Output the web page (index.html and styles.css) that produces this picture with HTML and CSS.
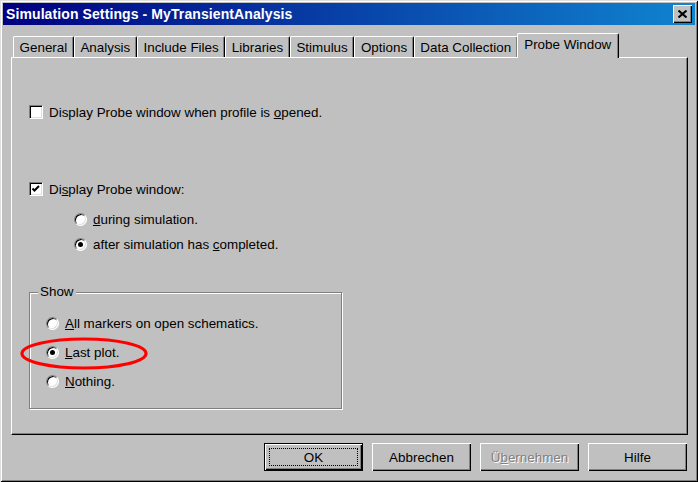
FILE: index.html
```html
<!DOCTYPE html>
<html lang="de">
<head>
  <meta charset="UTF-8" />
  <title>Simulation Settings - MyTransientAnalysis</title>
  <link rel="stylesheet" href="styles.css">
</head>
<body>
  <div class="window">
    <div class="titlebar">
      <span class="title">Simulation Settings - MyTransientAnalysis</span>
      <span class="close">
        <svg width="9" height="8" viewBox="0 0 9 8"><path d="M0.5 0.5 L8.5 7.5 M8.5 0.5 L0.5 7.5" stroke="#000" stroke-width="2" fill="none"/></svg>
      </span>
    </div>

    <div class="tabs">
      <div class="tab">General</div>
      <div class="tab">Analysis</div>
      <div class="tab">Include Files</div>
      <div class="tab">Libraries</div>
      <div class="tab">Stimulus</div>
      <div class="tab">Options</div>
      <div class="tab">Data Collection</div>
      <div class="tab active">Probe Window</div>
    </div>

    <div class="panel">
      <div class="row row-open">
        <span class="checkbox"></span>
        <span class="label">Display Probe window when profile is <u>o</u>pened.</span>
      </div>

      <div class="row row-display">
        <span class="checkbox">
          <svg width="8" height="8" viewBox="0 0 8 8"><path d="M0.5 3.5 L2.5 5.5 L7 1" stroke="#000" stroke-width="2" fill="none"/></svg>
        </span>
        <span class="label">Di<u>s</u>play Probe window:</span>
      </div>

      <div class="row option row-during">
        <span class="radio"></span>
        <span class="label"><u>d</u>uring simulation.</span>
      </div>

      <div class="row option row-after">
        <span class="radio on"></span>
        <span class="label">after simulation has <u>c</u>ompleted.</span>
      </div>

      <div class="group">
        <span class="group-title">Show</span>
        <div class="row group-row first">
          <span class="radio"></span>
          <span class="label"><u>A</u>ll markers on open schematics.</span>
        </div>
        <div class="row group-row">
          <span class="radio on"></span>
          <span class="label"><u>L</u>ast plot.</span>
        </div>
        <div class="row group-row">
          <span class="radio"></span>
          <span class="label"><u>N</u>othing.</span>
        </div>
        <svg class="mark" width="128" height="33" viewBox="0 0 128 33">
          <ellipse cx="64" cy="16.5" rx="62" ry="14.5" stroke="#ff0000" stroke-width="3.2" fill="none"/>
        </svg>
      </div>
    </div>

    <div class="buttons">
      <div class="btn default"><span class="focus">OK</span></div>
      <div class="btn">Abbrechen</div>
      <div class="btn disabled">Ü<u>b</u>ernehmen</div>
      <div class="btn">Hilfe</div>
    </div>
  </div>
</body>
</html>
```

FILE: styles.css
```css
body {
  margin: 0;
  font-family: 'Liberation Sans', Arial, sans-serif;
  font-size: 13.4px;
  color: #000;
  background: #c0c0c0;
}
.window {
  width: 698px;
  height: 482px;
  box-sizing: border-box;
  padding: 3px;
  background: #c0c0c0;
  box-shadow: inset 1px 1px 0 #dfdfdf, inset -1px -1px 0 #000,
              inset 2px 2px 0 #fff, inset -2px -2px 0 #808080;
}
.titlebar {
  height: 22px;
  display: flex;
  align-items: center;
  justify-content: space-between;
  padding: 0 3px;
  background: linear-gradient(to right, #000080, #1084d0);
}
.title {
  color: #fff;
  font-weight: bold;
  font-size: 14px;
  letter-spacing: 0.1px;
}
.close {
  width: 19px;
  height: 18px;
  box-sizing: border-box;
  display: flex;
  align-items: center;
  justify-content: center;
  background: #c0c0c0;
  box-shadow: inset 1px 1px 0 #fff, inset -1px -1px 0 #000, inset -2px -2px 0 #808080;
}

/* tabs */
.tabs {
  display: flex;
  align-items: flex-end;
  height: 24px;
  margin: 8px 0 0 8px;
  padding-left: 2px;
}
.tab {
  height: 21px;
  box-sizing: border-box;
  padding: 3px 5.6px 0 5.6px;
  border-top: 1px solid #fff;
  border-left: 1px solid #fff;
  border-right: 1px solid #000;
  border-radius: 2px 2px 0 0;
  box-shadow: inset -1px 0 0 #808080;
  white-space: nowrap;
}
.tab.active {
  height: 25px;
  margin: 0 -2px -1px -1px;
  padding: 3px 6.5px 0 6.5px;
  background: #c0c0c0;
  position: relative;
  z-index: 1;
}

/* page */
.panel {
  height: 378px;
  box-sizing: border-box;
  margin: 0 7px 0 8px;
  padding: 0 0 0 17px;
  border-top: 1px solid #fff;
  border-left: 1px solid #fff;
  border-right: 1px solid #000;
  border-bottom: 1px solid #000;
  box-shadow: inset -1px -1px 0 #808080;
}
.row {
  display: flex;
  align-items: center;
  height: 16px;
}
.label {
  margin-left: 6px;
  white-space: nowrap;
}
.row-open { margin-top: 46px; }
.row-display { margin-top: 61px; }
.row-during { margin-top: 14px; }
.row-after { margin-top: 9px; }
.option { padding-left: 45px; }

.checkbox {
  width: 14px;
  height: 14px;
  box-sizing: border-box;
  display: flex;
  align-items: center;
  justify-content: center;
  background: #fff;
  border-top: 1px solid #808080;
  border-left: 1px solid #808080;
  border-right: 1px solid #fff;
  border-bottom: 1px solid #fff;
  box-shadow: inset 1px 1px 0 #000, inset -1px -1px 0 #dfdfdf;
}
.radio {
  width: 13px;
  height: 13px;
  box-sizing: border-box;
  border-radius: 50%;
  background: #fff;
  border-top: 1px solid #808080;
  border-left: 1px solid #808080;
  border-right: 1px solid #fff;
  border-bottom: 1px solid #fff;
  box-shadow: inset 1px 1px 0 #000, inset -1px -1px 0 #dfdfdf;
  display: flex;
  align-items: center;
  justify-content: center;
}
.radio.on::after {
  content: "";
  width: 5px;
  height: 5px;
  border-radius: 50%;
  background: #000;
}

/* Show group */
.group {
  position: relative;
  width: 313px;
  height: 117px;
  box-sizing: border-box;
  margin-top: 40px;
  padding-left: 16px;
  border: 1px solid #808080;
  box-shadow: 1px 1px 0 #fff, inset 1px 1px 0 #fff;
}
.group-title {
  position: absolute;
  left: 8px;
  top: -9px;
  padding: 0 2px;
  background: #c0c0c0;
  line-height: 16px;
}
.group-row { margin-top: 13px; }
.group-row.first { margin-top: 22px; }
.mark {
  position: absolute;
  left: -10px;
  top: 44px;
}

/* buttons */
.buttons {
  display: flex;
  justify-content: flex-end;
  gap: 9px;
  margin: 8px 8px 0 0;
}
.btn {
  width: 99px;
  height: 28px;
  box-sizing: border-box;
  display: flex;
  align-items: center;
  justify-content: center;
  background: #c0c0c0;
  box-shadow: inset 1px 1px 0 #fff, inset -1px -1px 0 #000, inset -2px -2px 0 #808080;
}
.btn.default {
  box-shadow: inset 0 0 0 1px #000, inset 2px 2px 0 #fff, inset -2px -2px 0 #000, inset -3px -3px 0 #808080;
}
.focus {
  width: 89px;
  height: 18px;
  box-sizing: border-box;
  display: flex;
  align-items: center;
  justify-content: center;
  border: 1px dotted #000;
}
.btn.disabled {
  color: #808080;
  text-shadow: 1px 1px 0 #fff;
}
```
